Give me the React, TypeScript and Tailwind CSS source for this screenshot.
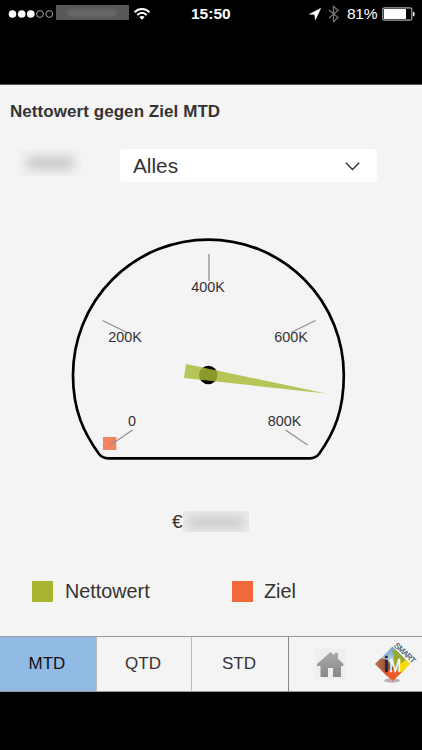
import { useState } from 'react';

const ticks = [
  { label: '0', x: 132, y: 426, line: [132.5, 430, 110.5, 445] },
  { label: '200K', x: 125, y: 341.5, line: [102.5, 320.5, 127, 332.5] },
  { label: '400K', x: 208, y: 291.5, line: [209, 254, 209, 281] },
  { label: '600K', x: 291, y: 341.5, line: [315.5, 320.5, 291, 332.5] },
  { label: '800K', x: 284.5, y: 426, line: [285.5, 430, 307.5, 445] },
];

const legend = [
  { label: 'Nettowert', color: 'bg-[#a7b52f]', width: 'w-50', gap: 'gap-3' },
  { label: 'Ziel', color: 'bg-[#f26a3a]', width: 'w-30', gap: 'gap-[11px]' },
];

function StatusBar() {
  return (
    <div className="relative flex h-7 items-center text-white">
      <svg className="ml-2 h-3 w-[46px] shrink-0" viewBox="0 0 46 12">
        <circle cx="4.5" cy="6" r="3.8" fill="#fff" />
        <circle cx="13.7" cy="6" r="3.8" fill="#fff" />
        <circle cx="22.8" cy="6" r="3.8" fill="#fff" />
        <circle cx="32" cy="6" r="3.4" fill="none" stroke="#ccc" strokeWidth="0.8" />
        <circle cx="41.3" cy="6" r="3.4" fill="none" stroke="#ccc" strokeWidth="0.8" />
      </svg>
      <div className="ml-0.5 mt-[-3px] flex h-[15px] w-[73px] items-center overflow-hidden bg-[#585858]">
        <div className="ml-3 h-1.5 w-12 rounded bg-[#6c6c6c] blur-[2px]" />
      </div>
      <svg className="ml-1 h-3 w-[18px]" viewBox="0 0 18 12" fill="none" stroke="#fff">
        <path d="M1.5 4.2C6 -0.1 12 -0.1 16.5 4.2" strokeWidth="1.9" />
        <path d="M4.3 7C7.2 4.2 10.8 4.2 13.7 7" strokeWidth="1.9" />
        <path d="M6.3 9.1C7.8 7.7 10.2 7.7 11.7 9.1L9 11.8Z" fill="#fff" stroke="none" />
      </svg>
      <span className="absolute left-[191px] text-[15.5px] leading-7 font-bold">15:50</span>
      <div className="ml-auto flex items-center pr-[7px]">
        <svg className="h-3 w-3" viewBox="0 0 12 12">
          <path d="M11.8 0.2L0.2 6.3L5.6 6.6L6.4 12Z" fill="#fff" stroke="#fff" strokeWidth="0.4" />
        </svg>
        <svg className="ml-[7px] h-[18px] w-[11px]" viewBox="0 0 11 18" fill="none" stroke="#777" strokeWidth="1.2">
          <path d="M1 5L10 12.5L5.5 16.7V1.3L10 5.5L1 13" />
        </svg>
        <span className="ml-[8px] w-[31px] text-[15.5px] leading-7 tracking-[-0.3px]">81%</span>
        <svg className="ml-[4px] h-3.5 w-[33px]" viewBox="0 0 33 14">
          <rect x="0.8" y="0.8" width="29" height="12.4" rx="1.8" fill="none" stroke="#aaa" strokeWidth="1.2" />
          <rect x="2" y="2" width="22" height="10" fill="#fff" />
          <path d="M31 4.5Q32.7 5 32.7 7T31 9.5Z" fill="#fff" />
        </svg>
      </div>
    </div>
  );
}

function Gauge() {
  return (
    <svg className="mx-auto mt-[48px] h-[240px] w-[422px] shrink-0" viewBox="0 230 422 240">
      <path
        d="M108 458.3H310Q315.5 458.3 319 454C334 433 343.8 411 343.8 375A135.4 135.4 0 0 0 73 375C73 411 84 433 99 454Q102.5 458.3 108 458.3Z"
        fill="none"
        stroke="#000"
        strokeWidth="2.7"
      />
      <rect x="103" y="437" width="13.3" height="13" fill="#f4845f" />
      {ticks.map((tick) => (
        <g key={tick.label}>
          <line
            x1={tick.line[0]}
            y1={tick.line[1]}
            x2={tick.line[2]}
            y2={tick.line[3]}
            stroke="#909090"
            strokeWidth="1.3"
          />
          <text x={tick.x} y={tick.y} textAnchor="middle" fontSize="14.4" fill="#333">
            {tick.label}
          </text>
        </g>
      ))}
      <circle cx="208.3" cy="375" r="9.3" fill="#000" />
      <path d="M186 364L326 393.5L184 378Z" fill="#a9b934" fillOpacity="0.82" />
    </svg>
  );
}

function HomeIcon() {
  return (
    <svg className="h-8 w-8" viewBox="0 0 32 32">
      <defs>
        <linearGradient id="home" x1="0" y1="0" x2="0" y2="1">
          <stop offset="0" stopColor="#aaa" />
          <stop offset="1" stopColor="#888" />
        </linearGradient>
      </defs>
      <rect width="31" height="31" x="0.5" y="0.5" rx="3" fill="#efefef" />
      <path
        d="M16.5 4L20.5 7.5V5H24V10.8L29.5 16V18H27V29H19V20H14V29H6.5V18H3V16Z"
        fill="url(#home)"
      />
    </svg>
  );
}

function SmartLogo() {
  return (
    <svg className="h-[50px] w-12" viewBox="372 639 48 50">
      <defs>
        <clipPath id="diamond">
          <path d="M392.5 646.5L410 664L392.5 681.5L375 664Z" />
        </clipPath>
        <linearGradient id="sky" x1="0" y1="0" x2="0" y2="1">
          <stop offset="0" stopColor="#6f9bc8" />
          <stop offset="0.6" stopColor="#dfe7ea" />
        </linearGradient>
        <linearGradient id="clay" x1="0" y1="0" x2="1" y2="0">
          <stop offset="0" stopColor="#c9764d" />
          <stop offset="1" stopColor="#6d3321" />
        </linearGradient>
      </defs>
      <ellipse cx="392" cy="680.5" rx="8" ry="2.2" fill="#888" opacity="0.6" />
      <g clipPath="url(#diamond)">
        <rect x="374" y="646" width="37" height="37" fill="url(#sky)" />
        <path d="M392 650Q400 648 405 659V674H389Q397 660 392 650Z" fill="#96a933" />
        <path d="M411 657L400 664L396 679H412Z" fill="#f8da08" />
        <path d="M374 664Q381 655 388 661L397 671L386 677Z" fill="url(#clay)" />
        <path d="M382 671Q392 668 402 672L393 682Z" fill="#ed5b2a" />
      </g>
      <text x="383.8" y="672" fontSize="22" fill="#102441" stroke="#102441" strokeWidth="0.5">i</text>
      <text x="389.2" y="672" fontSize="19" fill="#fff" stroke="#fff" strokeWidth="0.3" textLength="12" lengthAdjust="spacingAndGlyphs">M</text>
      <text transform="translate(393.6 646) rotate(43)" fontSize="8" fill="#31506a" stroke="#31506a" strokeWidth="0.15" textLength="26">SMART</text>
    </svg>
  );
}

export default function App() {
  const [period, setPeriod] = useState('MTD');

  return (
    <div className="flex h-[750px] w-[422px] flex-col overflow-hidden bg-black font-['Liberation_Sans',Arial,sans-serif] text-[#333]">
      <header className="h-[84px] shrink-0">
        <StatusBar />
      </header>

      <main className="flex h-[608px] shrink-0 flex-col border-t border-[#555] bg-[#f4f4f4]">
        <h1 className="mt-[15px] pl-[10px] text-[17px] leading-6 font-bold tracking-[0.06px]">
          Nettowert gegen Ziel MTD
        </h1>

        <div className="mt-[25px] flex h-[33px] items-center">
          <div className="ml-[18px] mt-[-6px] flex h-[27px] w-[63px] items-center justify-center overflow-hidden bg-[#f1f1f1]">
            <div className="h-3.5 w-12 rounded-full bg-[#cdcdcd] blur-[5px]" />
          </div>
          <button className="ml-[39px] flex h-[33px] w-[257px] items-center justify-between rounded-[4px] bg-white pt-px pl-[13px] pr-[17px] text-[20.8px]">
            Alles
            <svg className="h-[9px] w-[15px]" viewBox="0 0 15 9" fill="none" stroke="#333" strokeWidth="1.4">
              <path d="M0.8 0.8L7.5 7.6L14.2 0.8" />
            </svg>
          </button>
        </div>

        <Gauge />

        <div className="mt-[41px] flex h-[21px] items-center pl-[172px] text-[19px]">
          <span className="w-[11px] pt-px">€</span>
          <div className="flex h-[21px] w-[66px] items-center justify-center overflow-hidden bg-[#e9e9e9]">
            <div className="h-3 w-14 rounded bg-[#cfcfcf] blur-[4px]" />
          </div>
        </div>

        <div className="mt-[49px] flex h-[21px] pl-8 text-[19.8px]">
          {legend.map((item) => (
            <div key={item.label} className={`flex items-center ${item.width} ${item.gap}`}>
              <div className={`size-[21px] ${item.color}`} />
              {item.label}
            </div>
          ))}
        </div>

        <footer className="mt-auto flex h-14 border-y border-[#999]">
          {['MTD', 'QTD', 'STD'].map((item) => (
            <button
              key={item}
              onClick={() => setPeriod(item)}
              className={`border-r pr-0.5 text-[17px] ${item === 'STD' ? 'w-[97px] border-[#888]' : item === 'MTD' ? 'w-[97px] border-[#bbb]' : 'w-[95px] border-[#bbb]'} ${
                period === item ? 'bg-[#91bbe5] text-[#111]' : ''
              }`}
            >
              {item}
            </button>
          ))}
          <div className="flex flex-1 items-center pl-[25px]">
            <HomeIcon />
            <div className="ml-[26px]">
              <SmartLogo />
            </div>
          </div>
        </footer>
      </main>
    </div>
  );
}
